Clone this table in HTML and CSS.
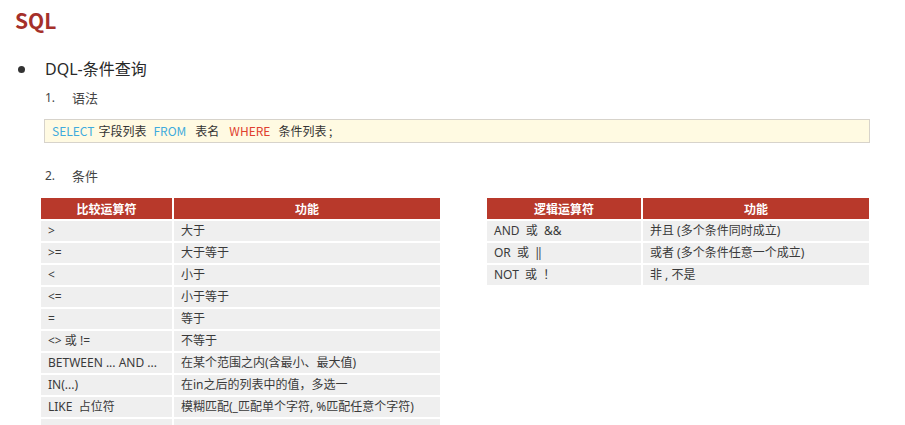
FILE: index.html
```html
<!DOCTYPE html>
<html lang="zh-CN">
<head>
<meta charset="utf-8">
<title>SQL - DQL条件查询</title>
<link rel="stylesheet" href="styles.css">
</head>
<body>
<div class="page">
  <h1 class="title">SQL</h1>
  <div class="bullet-row"><span class="dot"></span><span class="bullet-text">DQL-条件查询</span></div>
  <div class="item"><span class="num">1.</span><span>语法</span></div>
  <div class="code"><span class="kw g1">SELECT</span><span class="g2">字段列表</span><span class="kw g3">FROM</span><span class="g4">表名</span><span class="kw-red g5">WHERE</span><span>条件列表 ;</span></div>
  <div class="item item2"><span class="num">2.</span><span>条件</span></div>
  <div class="tables">
    <div class="tbl tbl-left">
      <div class="th">比较运算符</div><div class="th">功能</div>
      <div class="td">&gt;</div><div class="td">大于</div>
      <div class="td">&gt;=</div><div class="td">大于等于</div>
      <div class="td">&lt;</div><div class="td">小于</div>
      <div class="td">&lt;=</div><div class="td">小于等于</div>
      <div class="td">=</div><div class="td">等于</div>
      <div class="td">&lt;&gt; 或 !=</div><div class="td">不等于</div>
      <div class="td">BETWEEN ... AND ...</div><div class="td">在某个范围之内(含最小、最大值)</div>
      <div class="td">IN(...)</div><div class="td">在in之后的列表中的值，多选一</div>
      <div class="td">LIKE  占位符</div><div class="td">模糊匹配(_匹配单个字符, %匹配任意个字符)</div>
      <div class="td"></div><div class="td"></div>
    </div>
    <div class="tbl tbl-right">
      <div class="th">逻辑运算符</div><div class="th">功能</div>
      <div class="td">AND  或  &amp;&amp;</div><div class="td">并且 (多个条件同时成立)</div>
      <div class="td">OR  或  ‖</div><div class="td">或者 (多个条件任意一个成立)</div>
      <div class="td">NOT  或  ！</div><div class="td">非 , 不是</div>
    </div>
  </div>
</div>
</body>
</html>
```

FILE: styles.css
```css
html, body {
  margin: 0;
  padding: 0;
  background: #ffffff;
  overflow: hidden;
}
body {
  width: 905px;
  height: 425px;
  font-family: "Noto Sans", "Noto Sans CJK SC", sans-serif;
  color: #333333;
}
.page {
  padding: 6px 0 0 15px;
}
.title {
  margin: 0;
  font-family: "Noto Sans CJK SC", sans-serif;
  font-size: 21px;
  font-weight: 700;
  line-height: 28px;
  color: #a5302a;
}
.bullet-row {
  margin-top: 24px;
  display: flex;
  align-items: center;
  height: 22px;
}
.dot {
  width: 7px;
  height: 7px;
  border-radius: 50%;
  background: #333333;
  margin-left: 3px;
}
.bullet-text {
  margin-left: 20px;
  font-size: 16px;
  line-height: 22px;
  color: #2a2a2a;
}
.item {
  margin-top: 7px;
  margin-left: 30px;
  display: flex;
  align-items: center;
  height: 20px;
  font-size: 13px;
  color: #444444;
}
.num {
  width: 27px;
  font-size: 12px;
}
.item2 {
  margin-top: 22px;
}
.code {
  margin-top: 12px;
  margin-left: 29px;
  width: 817px;
  height: 22px;
  box-sizing: content-box;
  border: 1px solid #d7d3cb;
  background: #fffae2;
  padding-left: 7px;
  display: flex;
  align-items: center;
  font-family: "Noto Sans CJK SC", sans-serif;
  font-size: 12px;
  line-height: 22px;
  color: #333333;
  white-space: pre;
}
.g1 { margin-right: 4px; }
.g2 { margin-right: 7px; }
.g3 { margin-right: 9px; }
.g4 { margin-right: 10px; }
.g5 { margin-right: 8px; }
.kw {
  color: #3fabdd;
}
.kw-red {
  color: #e0402f;
}
.tables {
  margin-top: 13px;
  margin-left: 26px;
  display: flex;
  gap: 47px;
  align-items: flex-start;
}
.tbl {
  display: grid;
  gap: 2px;
}
.tbl-left {
  width: 399px;
  grid-template-columns: 131px 1fr;
}
.tbl-right {
  width: 382px;
  grid-template-columns: 154px 1fr;
}
.th {
  height: 21px;
  line-height: 21px;
  background: #b8392b;
  color: #ffffff;
  font-family: "Noto Sans CJK SC", sans-serif;
  font-size: 12px;
  font-weight: 700;
  text-align: center;
}
.td {
  height: 20px;
  line-height: 20px;
  background: #efefef;
  padding-left: 7px;
  font-size: 12px;
  color: #3a3a3a;
  white-space: pre;
}
```
